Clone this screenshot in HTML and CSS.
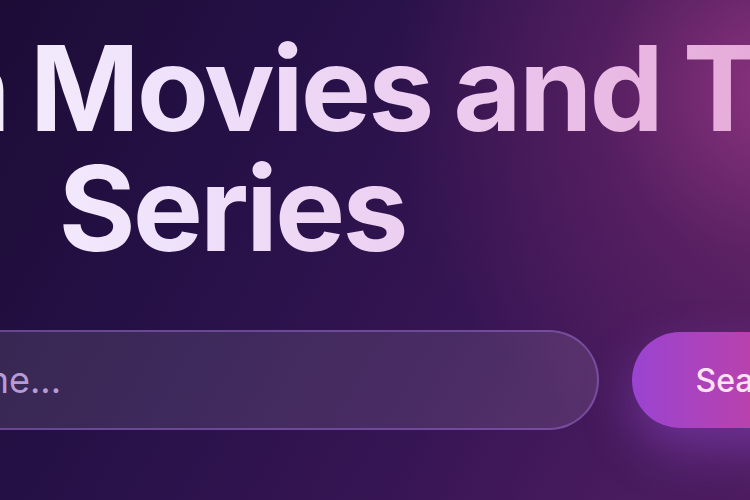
FILE: index.html
```html
<!DOCTYPE html>
<html lang="en">
<head>
<meta charset="utf-8">
<title>Search Movies and TV Series</title>
<link rel="stylesheet" href="styles.css">
</head>
<body>
  <main class="hero">
    <h1 class="hero-title">Search Movies and TV<br>Series</h1>
    <form class="search-row" onsubmit="return false">
      <input class="search-input" type="text" placeholder="Enter movie or TV name...">
      <button class="search-button" type="submit">Search</button>
    </form>
  </main>
</body>
</html>
```
FILE: styles.css
```css
html, body {
  margin: 0;
  height: 100%;
}

body {
  overflow: hidden;
  font-family: Inter, "Noto Sans", sans-serif;
  background:
    radial-gradient(circle at 770px 90px, rgba(170, 62, 140, 0.7) 0, rgba(130, 45, 115, 0.38) 170px, rgba(100, 35, 100, 0) 380px),
    radial-gradient(ellipse at 700px 520px, rgba(80, 30, 100, 0.5) 0, rgba(80, 30, 100, 0) 300px),
    linear-gradient(120deg, #1c0c36 0%, #271148 35%, #3a1656 70%, #4a1c5c 100%);
}

.hero {
  width: 1270px;
  margin-left: -403px;
  padding-top: 28px;
  display: flex;
  flex-direction: column;
  align-items: center;
}

.hero-title {
  margin: 0;
  font-size: 118px;
  line-height: 120px;
  font-weight: 700;
  letter-spacing: -0.025em;
  word-spacing: -3px;
  text-align: center;
  background: linear-gradient(90deg, #ffffff 0%, #efe2fb 45%, #ecc9ee 70%, #e4a0d2 100%);
  -webkit-background-clip: text;
  background-clip: text;
  color: transparent;
}

.search-row {
  margin-top: 62px;
  width: 100%;
  display: flex;
  align-items: center;
  gap: 33px;
}

.search-input {
  flex: 1;
  min-width: 0;
  height: 100px;
  box-sizing: border-box;
  padding: 0 22px;
  border-radius: 50px;
  border: 2px solid rgba(160, 110, 220, 0.45);
  background: rgba(255, 255, 255, 0.1);
  color: #f4ecff;
  font-family: inherit;
  font-size: 36px;
  outline: none;
}

.search-input::placeholder {
  color: #b69bd6;
}

.search-button {
  height: 96px;
  padding: 0 64px;
  border: none;
  border-radius: 48px;
  background: linear-gradient(90deg, #9a44d2 0%, #d63f88 100%);
  color: #fde3f3;
  font-family: inherit;
  font-size: 32px;
  font-weight: 500;
  box-shadow: 0 22px 50px rgba(168, 85, 247, 0.35);
  cursor: pointer;
}
```
